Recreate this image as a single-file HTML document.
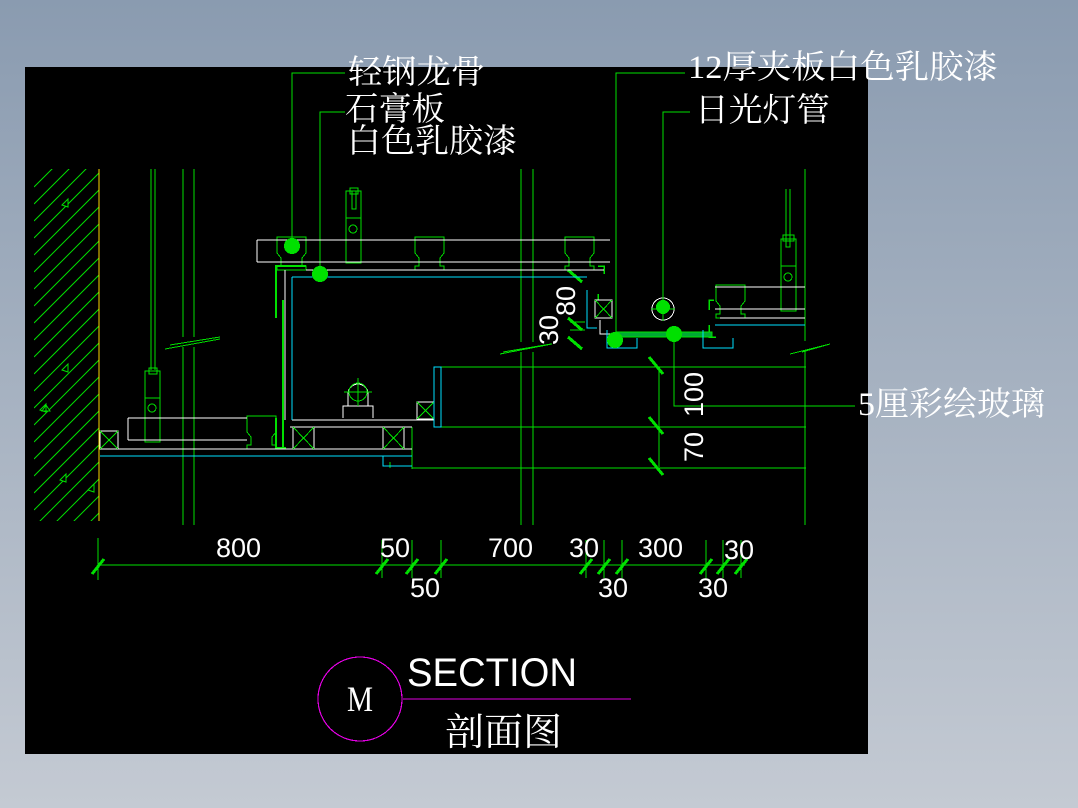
<!DOCTYPE html>
<html><head><meta charset="utf-8"><style>
html,body{margin:0;padding:0;width:1078px;height:808px;overflow:hidden;background:linear-gradient(#8a9bb0,#c4cad3);}
svg{position:absolute;left:0;top:0}
.t{font-family:"Liberation Serif","Noto Serif CJK SC","Noto Sans CJK SC",serif;fill:#fff;}
.d{font-family:"Liberation Sans","DejaVu Sans",sans-serif;fill:#fff;font-size:27px;}
</style></head><body>
<svg width="1078" height="808" viewBox="0 0 1078 808" xmlns="http://www.w3.org/2000/svg" shape-rendering="crispEdges">
<rect x="25" y="67" width="843" height="687" fill="#000"/>
<defs><clipPath id="wall"><rect x="34" y="169" width="65" height="352"/></clipPath></defs>
<g clip-path="url(#wall)" stroke="#00e000" stroke-width="1" shape-rendering="auto">
<path d="M34 187l65-65M34 204l65-65M34 221l65-65M34 238l65-65M34 255l65-65M34 272l65-65M34 289l65-65M34 306l65-65M34 323l65-65M34 340l65-65M34 357l65-65M34 374l65-65M34 391l65-65M34 408l65-65M34 425l65-65M34 442l65-65M34 459l65-65M34 476l65-65M34 493l65-65M34 510l65-65M34 527l65-65M34 544l65-65M34 561l65-65M34 578l65-65M34 595l65-65M34 612l65-65"/>
<path d="M62 205l6-6v8zM160 270l6-6v8zM62 370l6-6v8zM40 410l6-6v8zM60 480l6-6v8zM88 490l6-6v8zM46 405l-4 6h8z"/>
</g>
<line x1="99" y1="169" x2="99" y2="521" stroke="#ffd800"/>
<g fill="none" stroke="#00e000" stroke-width="1">
<path d="M151 169V370M155 169V370M183 169V337M194 169V337M183 347V525M194 347V525M521 169V342M533 169V342M521 352V525M533 352V525M805 169V341M805 351V525"/>
<path d="M170 345l50-8M165 349l55-10M503 352l48-8M500 354l52-10M802 352l28-8M790 354l40-10"/>
<rect x="145" y="371" width="15" height="71"/><path d="M145 398h15M149 368h8v6h-8z"/><circle cx="152" cy="408" r="4"/>
<rect x="346" y="191" width="15" height="72"/><path d="M346 218h15M350 188h8v6h-8zM352 191v18h4v-18"/><circle cx="353" cy="229" r="4"/>
<rect x="781" y="239" width="15" height="72"/><path d="M781 266h15M783 235h11v6h-11zM786 189v58h4v-58"/><circle cx="788" cy="277" r="4"/>
<path d="M277 237h29v16l-4 5v8h4v4h-29v-4h4v-8l-4-5z"/>
<path d="M415 237h29v16l-4 5v8h4v4h-29v-4h4v-8l-4-5z"/>
<path d="M565 237h29v16l-4 5v8h4v4h-29v-4h4v-8l-4-5z"/>
<path d="M247 416h29v16l-4 5v8h4v4h-29v-4h4v-8l-4-5z"/>
<path d="M716 285h29v16l-4 5v8h4v4h-29v-4h4v-8l-4-5z"/>
<path d="M276 270v-4h30M276 270v48M283 300v120M276 418v30h10M283 420v28" stroke-width="2"/>
<path d="M598 266h6v8M598 294v6" stroke-width="1.5"/>
<path d="M714 300h-5v10M709 325v12h7" stroke-width="1.5"/>
<rect x="617" y="332" width="95" height="5" fill="#0a3" stroke="#00e000"/>
<path d="M441 367H806M441 427H806M441 468H806M412 468h30M412 427v42M390 468v-6"/>
<path d="M292 246V73h53M320 274V112h25M616 340V73h69M663 307V112h27M674 334V406h181"/>
<path d="M98 565H745M98 538v42M382 540v38M412 540v38M441 540v38M586 540v38M604 540v38M622 540v38M706 540v38M723 540v38M741 540v38"/>
<path d="M659 367v100M650 367h20"/>
<path d="M570 330h15M570 322h15"/>
</g>
<g stroke="#00e000" stroke-width="3">
<path d="M92 574l12-15M376 574l12-15M406 574l12-15M435 574l12-15M580 574l12-15M598 574l12-15M616 574l12-15M700 574l12-15M717 574l12-15M735 574l12-15"/>
<path d="M649 357l14 17M649 417l14 17M649 458l14 17M568 270l14 12M568 318l14 12M568 337l14 12"/>
</g>
<g fill="none" stroke="#fff" stroke-width="1">
<path d="M257 240H610M257 262H610M257 240v22M306 270H604M285 270V420M128 418H247M128 440H247M128 418v22M100 449H412M292 420H434M290 427H412M100 431h18v18h-18z"/>
<path d="M715 287H805M715 309H805M720 318H805"/>
<rect x="293" y="427" width="21" height="22"/><rect x="383" y="427" width="21" height="22"/><rect x="417" y="402" width="17" height="17"/><rect x="595" y="300" width="17" height="18"/>
<path d="M343 418v-12h30v12M348 406v-12a10 10 0 0 1 20 0v12"/>
<circle cx="663" cy="309" r="11"/>
<path d="M600 320v14h10"/>
</g>
<g fill="none" stroke="#00e000" stroke-width="1"><path d="M100 431l18 18M118 431l-18 18M293 427l21 22M314 427l-21 22M383 427l21 22M404 427l-21 22M417 402l17 17M434 402l-17 17M595 300l17 18M612 300l-17 18"/><circle cx="358" cy="392" r="9"/><path d="M344 392h28M358 378v28M651 309h24M663 297v24"/></g>
<g fill="none" stroke="#00e0ff" stroke-width="1">
<path d="M292 277H587M292 277V420M100 456H412M434 367v60h7V367zM383 456v10h29M587 290v38h10M607 330v18h30v-10M703 330v18h30v-10M715 325H805"/>
</g>
<g fill="#00e000"><circle cx="292" cy="246" r="8"/><circle cx="320" cy="274" r="8"/><circle cx="615" cy="340" r="8"/><circle cx="674" cy="334" r="8"/><circle cx="663" cy="307" r="7"/></g>
<g class="t" font-size="33">
<text x="348" y="83" textLength="137" lengthAdjust="spacingAndGlyphs">轻钢龙骨</text>
<text x="345" y="120" textLength="100" lengthAdjust="spacingAndGlyphs">石膏板</text>
<text x="347" y="152" textLength="170" lengthAdjust="spacingAndGlyphs">白色乳胶漆</text>
<text x="688" y="78" textLength="310" lengthAdjust="spacingAndGlyphs">12厚夹板白色乳胶漆</text>
<text x="695" y="121" textLength="135" lengthAdjust="spacingAndGlyphs">日光灯管</text>
<text x="858" y="415" textLength="187" lengthAdjust="spacingAndGlyphs">5厘彩绘玻璃</text>
</g>
<g class="d">
<text x="216" y="557">800</text><text x="380" y="557">50</text><text x="410" y="597">50</text><text x="488" y="557">700</text>
<text x="569" y="557">30</text><text x="598" y="597">30</text><text x="638" y="557">300</text><text x="698" y="597">30</text><text x="724" y="559">30</text>
<text transform="translate(703 462) rotate(-90)">70</text>
<text transform="translate(703 417) rotate(-90)">100</text>
<text transform="translate(558 345) rotate(-90)">30</text>
<text transform="translate(575 316) rotate(-90)">80</text>
</g>
<circle cx="360" cy="699" r="42" fill="none" stroke="#e000e0" stroke-width="1.2"/>
<line x1="403" y1="699" x2="631" y2="699" stroke="#e000e0"/>
<text x="347" y="711" class="t" font-size="36" textLength="26" lengthAdjust="spacingAndGlyphs">M</text>
<text x="407" y="686" font-family="Liberation Sans,sans-serif" font-size="40" fill="#fff" textLength="170" lengthAdjust="spacingAndGlyphs" transform="translate(0 0)">SECTION</text>
<text x="445" y="745" class="t" font-size="38" textLength="117" lengthAdjust="spacingAndGlyphs">剖面图</text>
</svg>
</body></html>
